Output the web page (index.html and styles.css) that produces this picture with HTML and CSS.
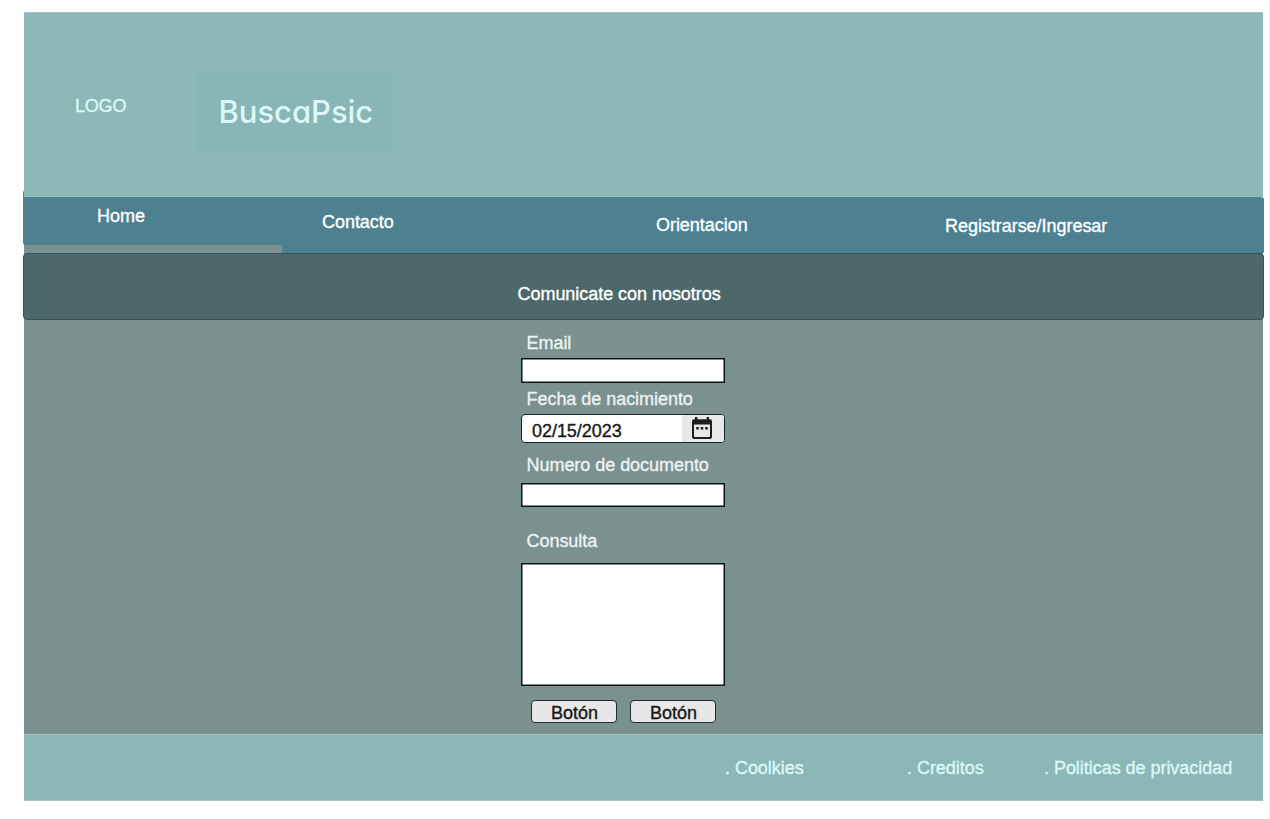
FILE: index.html
```
<!DOCTYPE html>
<html lang="es">
<head>
<meta charset="utf-8">
<title>BuscaPsic</title>
<link rel="stylesheet" href="styles.css">
</head>
<body>
<div class="page">
  <header class="header">
    <div class="logo">LOGO</div>
    <div class="brand"><span class="brand-name">BuscaPsic</span></div>
  </header>
  <nav class="nav">
    <a class="nav-item nav-home">Home</a>
    <a class="nav-item nav-contact">Contacto</a>
    <a class="nav-item nav-guide">Orientacion</a>
    <a class="nav-item nav-login">Registrarse/Ingresar</a>
  </nav>
  <h1 class="title">Comunicate con nosotros</h1>
  <main class="main">
    <form class="form">
      <label class="label" for="email">Email</label>
      <input class="field" id="email">
      <label class="label label-date" for="date">Fecha de nacimiento</label>
      <div class="date" id="date">
        <span class="date-value">02/15/2023</span>
        <span class="date-button">
          <svg class="calendar" viewBox="0 0 20 22" width="20" height="22">
            <path fill="#1f1f21" fill-rule="evenodd" d="M3 0h2.400v2.200h9.200V0H17v2.200h1q2 0 2 2V20q0 2-2 2H2q-2 0-2-2V4.200q0-2 2-2h1zM2 7.600V19q0 1 1 1h14q1 0 1-1V7.600z"/>
            <path fill="#1f1f21" d="M4.200 10h2.600v2.600H4.200zM8.700 10h2.600v2.600H8.700zM13.200 10h2.600v2.600h-2.600z"/>
          </svg>
        </span>
      </div>
      <label class="label label-doc" for="doc">Numero de documento</label>
      <input class="field" id="doc">
      <label class="label label-query" for="query">Consulta</label>
      <textarea class="field area" id="query"></textarea>
      <div class="actions">
        <button class="button" type="button">Botón</button>
        <button class="button" type="button">Botón</button>
      </div>
    </form>
  </main>
  <footer class="footer">
    <a class="link">. Coolkies</a>
    <a class="link link-credits">. Creditos</a>
    <a class="link link-privacy">. Politicas de privacidad</a>
  </footer>
</div>
</body>
</html>
```
FILE: styles.css
```
* { box-sizing: border-box; }
body {
  margin: 0;
  min-height: 819px;
  padding: 12px 6px 0 24px;
  border-right: 1px solid #f0f0f0;
  background: #fff;
  font: 18px/22px "Liberation Sans", Arial, sans-serif;
  letter-spacing: -0.04px;
  color: #fff;
  -webkit-text-stroke: 0.35px currentColor;
}
.page {
  width: 1239px;
  background: linear-gradient(#7a9190, #7a9190) 0 235px / 100% 500px no-repeat;
}
.header {
  display: flex;
  height: 185px;
  border-top: 1px solid #a5c5c3;
  border-bottom: 1px solid #9cc4c6;
  background: #8cb8b7;
  color: #dcf8f8;
}
.logo { width: 173px; padding: 82px 0 0 51px; letter-spacing: -0.2px; }
.brand {
  width: 195px;
  height: 79px;
  margin-top: 59px;
  padding: 18px 0 0 21.500px;
  background: #88b6b7;
}
.brand-name {
  font: 500 31px/44px Inter, sans-serif;
  font-feature-settings: "cv11";
  -webkit-text-stroke: 0;
}
.nav {
  display: flex;
  height: 57px;
  margin: 0 -1px;
  background: linear-gradient(#7a9190, #7a9190) 1px 0 / 258px 100% no-repeat;
}
.nav-item { background: #4d8191; }
.nav-home {
  width: 259px;
  height: 55px;
  margin-top: -7px;
  padding: 15px 0 0 74px;
  border-radius: 3px 0 0 3px;
  clip-path: polygon(0 0, 1px 0, 1px 7px, 100% 7px, 100% 100%, 0 100%);
}
.nav-contact { width: 318px; padding: 14px 0 0 40px; }
.nav-guide { width: 300px; padding: 17px 0 0 56px; }
.nav-login { flex: 1; padding: 18px 0 0 45px; border-radius: 0 3px 3px 0; }
.title {
  position: relative;
  height: 67px;
  margin: -1px -1px 0;
  padding: 29px 0 0 493.500px;
  border: 1px solid #36555b;
  border-radius: 4px;
  background: #4c686b;
  font-size: 18px;
  font-weight: 400;
}
.main { height: 414px; padding: 12px 0 0 497px; background: #7a9190; }
.form { display: flex; flex-direction: column; width: 204px; }
.label { padding-left: 5.500px; color: #edf2f2; }
.label-date { margin-top: 5px; }
.label-doc { margin-top: 11px; }
.label-query { margin-top: 23px; }
.field {
  display: block;
  width: 204px;
  height: 25px;
  margin: 4px 0 0;
  padding: 0 8px;
  border: 1px solid #0c1414;
  border-radius: 0;
  background: #fff;
  box-shadow: inset 0 0 0 0.500px #0c1414;
}
.label-doc + .field { height: 24px; margin-top: 7px; }
.area { height: 123px; margin-top: 11px; resize: none; }
.date {
  display: flex;
  height: 29px;
  margin-top: 4px;
  border: 1px solid #182323;
  border-radius: 4px;
  background: #fff;
  color: #171717;
  overflow: hidden;
}
.date-value { flex: 1; padding: 5px 0 0 10px; }
.date-button { width: 42px; padding: 2px 0 0 10px; background: #e8e8e9; }
.calendar { display: block; }
.actions { display: flex; gap: 13px; margin: 14px 0 0 10px; }
.button {
  width: 86px;
  height: 23px;
  padding: 2px 0 0 1px;
  border: 1px solid #222b2c;
  border-radius: 4px;
  background: #e7e7e8;
  color: #171717;
  font: inherit;
  line-height: 20px;
  -webkit-text-stroke: inherit;
}
.footer {
  display: flex;
  height: 67px;
  padding: 22px 0 0 701px;
  border-top: 1px solid #a5c5c4;
  border-bottom: 1px solid #a5c5c3;
  background: #8bb7b6;
  color: #dcf8f8;
}
.link { width: 182px; }
.link-credits { width: 137px; }
.link-privacy { width: 200px; }
```
